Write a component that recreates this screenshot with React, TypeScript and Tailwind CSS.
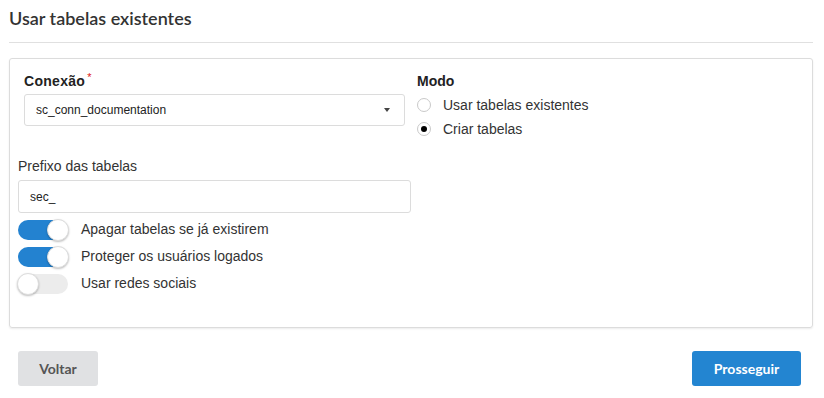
import { useState } from 'react';

const arial = "font-['Liberation_Sans',Arial,sans-serif]";
const lato = "font-['Lato','Liberation_Sans',sans-serif]";

function Toggle({ on, onChange, label }: { on: boolean; onChange: () => void; label: string }) {
  return (
    <div className="flex items-center h-[27px]">
      <button
        onClick={onChange}
        className={`relative w-[50px] h-[20px] rounded-full transition-colors ${on ? 'bg-[#2382d0]' : 'bg-[#ececec]'}`}
      >
        <span
          className={`absolute top-[-1px] w-[22px] h-[22px] rounded-full bg-white border border-[#ddd] shadow-[0_1px_2px_rgba(0,0,0,0.25)] ${on ? 'left-[29px]' : 'left-[-1px]'}`}
        />
      </button>
      <span className="ml-[13px] text-[14px] text-[#333]">{label}</span>
    </div>
  );
}

function Radio({ checked, label, onClick }: { checked: boolean; label: string; onClick: () => void }) {
  return (
    <div className="flex items-center h-[24px] cursor-pointer" onClick={onClick}>
      <span className="w-[14px] h-[14px] rounded-full border border-[#c9c9c9] bg-white flex items-center justify-center">
        {checked && <span className="w-[6px] h-[6px] rounded-full bg-black" />}
      </span>
      <span className="ml-[12px] text-[14px] text-[#333]">{label}</span>
    </div>
  );
}

export default function App() {
  const [mode, setMode] = useState<'existing' | 'create'>('create');
  const [toggles, setToggles] = useState([true, true, false]);
  const labels = ['Apagar tabelas se já existirem', 'Proteger os usuários logados', 'Usar redes sociais'];

  return (
    <div className={`w-[824px] h-[398px] bg-white px-[9px] ${arial}`}>
      <h1 className={`${lato} text-[18px] font-semibold text-[#333] pt-[4px] h-[42px] leading-[28px]`}>
        Usar tabelas existentes
      </h1>
      <div className="h-px bg-[#e0e0e0] w-[804px]" />

      <div className="mt-[15px] w-[804px] h-[270px] border border-[#dcdcdc] rounded-[3px] shadow-[0_1px_2px_rgba(0,0,0,0.08)]">
        <div className="flex pt-[12px] px-[14px]">
          <div className="w-[381px]">
            <div className="flex items-start h-[23px]">
              <span className="text-[14px] font-bold text-[#222] leading-[20px] tracking-[0.3px]">Conexão</span>
              <span className="text-[#e02020] text-[11px] leading-[12px] ml-[2px]">*</span>
            </div>
            <div className="h-[32px] border border-[#dcdcdc] rounded-[3px] flex items-center px-[11px] justify-between">
              <span className="text-[12px] text-[#222]">sc_conn_documentation</span>
              <span className="w-0 h-0 border-l-[3.5px] border-r-[3.5px] border-t-[4px] border-l-transparent border-r-transparent border-t-[#444] mr-[3px]" />
            </div>
          </div>
          <div className="ml-[12px] pt-[2px]">
            <div className="text-[14px] font-bold text-[#222] leading-[17px] mb-[3px]">Modo</div>
            <Radio checked={mode === 'existing'} label="Usar tabelas existentes" onClick={() => setMode('existing')} />
            <Radio checked={mode === 'create'} label="Criar tabelas" onClick={() => setMode('create')} />
          </div>
        </div>

        <div className="px-[8px] mt-[17px]">
          <div className="text-[14px] text-[#333] leading-[16px] mb-[6px]">Prefixo das tabelas</div>
          <div className="w-[393px] h-[33px] border border-[#dcdcdc] rounded-[3px] flex items-center px-[11px]">
            <span className="text-[12px] text-[#222]">sec_</span>
          </div>
          <div className="mt-[3px]">
            {labels.map((l, i) => (
              <Toggle
                key={l}
                label={l}
                on={toggles[i]}
                onChange={() => setToggles(toggles.map((t, j) => (j === i ? !t : t)))}
              />
            ))}
          </div>
        </div>
      </div>

      <div className={`flex justify-between mt-[23px] px-[9px] w-[804px] ${lato}`}>
        <button className="w-[80px] h-[35px] rounded-[3px] bg-[#e0e1e3] text-[#555] text-[14px] font-bold">Voltar</button>
        <button className="w-[109px] h-[35px] mr-[3px] rounded-[3px] bg-[#2385d1] text-white text-[14px] font-bold">Prosseguir</button>
      </div>
    </div>
  );
}
